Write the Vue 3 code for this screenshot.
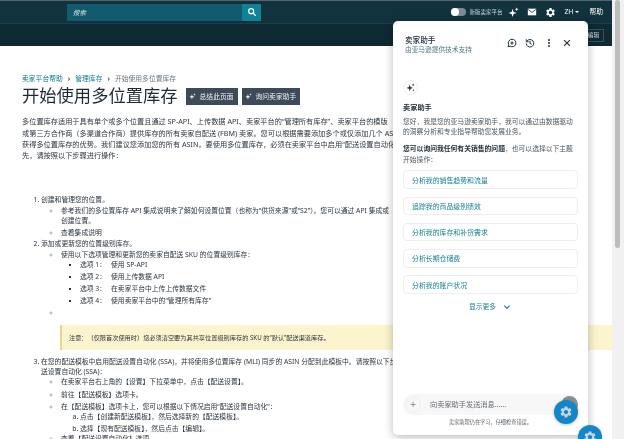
<template>
  <div class="page">
    <div class="viewport">
      <header class="topbar">
        <div class="nav-main">
          <div class="search">
            <span class="search-input">搜索</span>
            <button class="search-btn">
              <svg viewBox="0 0 24 24" width="10" height="10"><circle cx="10" cy="10" r="6" fill="none" stroke="#fff" stroke-width="3"/><path d="M15 15l6 6" stroke="#fff" stroke-width="3"/></svg>
            </button>
          </div>
          <div class="nav-right">
            <span class="toggle"><i></i></span>
            <span class="toggle-label">新版卖家平台</span>
            <svg class="nav-icon spark" viewBox="0 0 24 24" width="11" height="11"><path :d="sparkBig" fill="#fff"/><path :d="sparkSmall" fill="#fff"/></svg>
            <svg class="nav-icon mail" viewBox="0 0 24 24" width="10" height="10"><path d="M2 4h20v16H2z" fill="#fff"/><path d="M3 6l9 7 9-7" fill="none" stroke="#12333d" stroke-width="2"/></svg>
            <svg class="nav-icon gear" viewBox="0 0 24 24" width="11" height="11"><path :d="gear" fill="#fff"/></svg>
            <span class="nav-text lang">ZH <em></em></span>
            <span class="nav-text">帮助</span>
          </div>
        </div>
        <div class="nav-sub">
          <span class="edit-btn">编辑</span>
        </div>
      </header>

      <main class="content">
        <nav class="crumbs">
          <a>卖家平台帮助</a><b>›</b><a>管理库存</a><b>›</b><span>开始使用多位置库存</span>
        </nav>
        <div class="title-row">
          <h1>开始使用多位置库存</h1>
          <button class="ai-btn"><svg viewBox="0 0 24 24" width="7" height="7"><path :d="sparkBig" fill="#fff"/><path :d="sparkSmall" fill="#fff"/></svg>总结此页面</button>
          <button class="ai-btn"><svg viewBox="0 0 24 24" width="7" height="7"><path :d="sparkBig" fill="#fff"/><path :d="sparkSmall" fill="#fff"/></svg>询问卖家助手</button>
        </div>
        <p class="intro">
          多位置库存适用于具有单个或多个位置且通过 SP-API、上传数据 API、卖家平台的“管理所有库存”、卖家平台的模版<br>
          或第三方合作商（多渠道合作商）提供库存的所有卖家自配送 (FBM) 卖家。您可以根据需要添加多个或仅添加几个 ASIN<br>
          获得多位置库存的优势。我们建议您添加您的所有 ASIN。要使用多位置库存，必须在卖家平台中启用“配送设置自动化”<br>
          先，请按照以下步骤进行操作：
        </p>

        <ol class="steps">
          <li>
            创建和管理您的位置。
            <ul class="sub">
              <li>参考我们的多位置库存 API 集成说明来了解如何设置位置（也称为“供货来源”或“S2”）。您可以通过 API 集成或<br>创建位置。</li>
              <li class="gap">查看集成说明</li>
            </ul>
          </li>
          <li class="step2">
            添加或更新您的位置级别库存。
            <ul class="sub">
              <li>
                使用以下选项管理和更新您的卖家自配送 SKU 的位置级别库存：
                <ul class="opts">
                  <li v-for="o in options" :key="o.n"><span>选项 {{ o.n }}：</span>{{ o.text }}</li>
                </ul>
              </li>
              <li class="gap">&nbsp;</li>
            </ul>
            <div class="note"><span>注意：</span>（仅限首次使用时）您必须清空要为其共享位置级别库存的 SKU 的“默认”配送渠道库存。</div>
          </li>
          <li class="step3">
            在您的配送模板中启用配送设置自动化 (SSA)，并将使用多位置库存 (MLI) 同步的 ASIN 分配到此模板中。请按照以下步骤<br>送设置自动化 (SSA)：
            <ul class="sub">
              <li>在卖家平台右上角的【设置】下拉菜单中，点击【配送设置】。</li>
              <li class="gap3">前往【配送模板】选项卡。</li>
              <li class="gap2">
                在【配送模板】选项卡上，您可以根据以下情况启用“配送设置自动化”：
                <ol class="alpha">
                  <li>点击【创建新配送模板】，然后选择新的【配送模板】。</li>
                  <li class="gap2">选择【现有配送模板】，然后点击【编辑】。</li>
                </ol>
              </li>
              <li>查看【配送设置自动化】选项。</li>
            </ul>
          </li>
        </ol>
      </main>
    </div>

    <div class="scrollbar"><i></i></div>

    <aside class="panel">
      <div class="panel-head">
        <div class="panel-names">
          <div class="panel-title">卖家助手</div>
          <div class="panel-sub">由亚马逊提供技术支持</div>
        </div>
        <div class="panel-tools">
          <svg viewBox="0 0 24 24" width="10" height="10"><path d="M12 3a9 9 0 0 0-8 13l-1.500 5 5-1.500A9 9 0 1 0 12 3z" fill="none" stroke="#20303a" stroke-width="2.400"/><path d="M12 8v8M8 12h8" stroke="#20303a" stroke-width="2.400"/></svg>
          <svg viewBox="0 0 24 24" width="10" height="10"><path d="M5 7a9 9 0 1 1-2 6" fill="none" stroke="#20303a" stroke-width="2.400"/><path d="M3 3v6h6" fill="none" stroke="#20303a" stroke-width="2.400"/><path d="M12 7v6l4 2" fill="none" stroke="#20303a" stroke-width="2.400"/></svg>
          <svg viewBox="0 0 24 24" width="10" height="10"><circle cx="12" cy="5" r="2.400" fill="#20303a"/><circle cx="12" cy="12" r="2.400" fill="#20303a"/><circle cx="12" cy="19" r="2.400" fill="#20303a"/></svg>
          <svg viewBox="0 0 24 24" width="10" height="10"><path d="M5 5l14 14M19 5L5 19" stroke="#20303a" stroke-width="2.800"/></svg>
        </div>
      </div>

      <div class="panel-body">
        <div class="badge"><svg viewBox="0 0 24 24" width="9" height="9"><path :d="sparkBig" fill="#20303a"/><path :d="sparkSmall" fill="#20303a"/><circle cx="20" cy="19" r="1.800" fill="#20303a"/></svg></div>
        <div class="bot-name">卖家助手</div>
        <p class="bot-text">您好，我是您的亚马逊卖家助手，我可以通过由数据驱动的洞察分析和专业指导帮助您发展业务。</p>
        <p class="bot-text second"><strong>您可以询问我任何有关销售的问题</strong>，也可以选择以下主题开始操作：</p>
        <div class="topics">
          <button v-for="t in topics" :key="t" class="topic">{{ t }}</button>
        </div>
        <div class="more">显示更多<svg viewBox="0 0 24 24" width="8" height="8"><path d="M4 8l8 8 8-8" fill="none" stroke="#1a7f93" stroke-width="3.500"/></svg></div>
      </div>

      <div class="composer">
        <div class="input-row">
          <span class="plus">+</span>
          <span class="placeholder">向卖家助手发送消息......</span>
          <span class="send"></span>
        </div>
        <div class="disclaimer">卖家助理仍在学习，仔细检查错误。</div>
      </div>
    </aside>

    <div class="fab fab-a"><svg viewBox="0 0 24 24" width="14" height="14"><path :d="gear" fill="#c9d3da"/></svg></div>
    <div class="fab fab-b"><svg viewBox="0 0 24 24" width="14" height="14"><path :d="gear" fill="#c9d3da"/></svg></div>
  </div>
</template>

<script setup>
const sparkBig = 'M10 4l2.200 6.800L19 13l-6.800 2.200L10 22l-2.200-6.800L1 13l6.800-2.200z'
const sparkSmall = 'M19 1l1.200 2.800L23 5l-2.800 1.200L19 9l-1.200-2.800L15 5l2.800-1.200z'
const gear = 'M19.14 12.94c.04-.3.06-.61.06-.94 0-.32-.02-.64-.07-.94l2.03-1.58a.49.49 0 0 0 .12-.61l-1.92-3.32a.488.488 0 0 0-.59-.22l-2.39.96c-.5-.38-1.03-.7-1.62-.94l-.36-2.54a.484.484 0 0 0-.48-.41h-3.84c-.24 0-.43.17-.47.41l-.36 2.54c-.59.24-1.13.57-1.62.94l-2.39-.96c-.22-.08-.47 0-.59.22L2.74 8.87c-.12.21-.08.47.12.61l2.03 1.58c-.05.3-.09.63-.09.94s.02.64.07.94l-2.03 1.58a.49.49 0 0 0-.12.61l1.92 3.32c.12.22.37.29.59.22l2.39-.96c.5.38 1.03.7 1.62.94l.36 2.54c.05.24.24.41.48.41h3.84c.24 0 .44-.17.47-.41l.36-2.54c.59-.24 1.13-.56 1.62-.94l2.39.96c.22.08.47 0 .59-.22l1.92-3.32c.12-.22.07-.47-.12-.61l-2.01-1.58zM12 15.6c-1.98 0-3.6-1.62-3.6-3.6s1.62-3.6 3.6-3.6 3.6 1.62 3.6 3.6-1.62 3.6-3.6 3.6z'

const options = [
  { n: 1, text: '使用 SP-API' },
  { n: 2, text: '使用上传数据 API' },
  { n: 3, text: '在卖家平台中上传上传数据文件' },
  { n: 4, text: '使用卖家平台中的“管理所有库存”' },
]

const topics = [
  '分析我的销售趋势和流量',
  '追踪我的商品级别绩效',
  '分析我的库存和补货需求',
  '分析长期仓储费',
  '分析我的账户状况',
]
</script>

<style>
html, body { margin: 0; background: #fff; overflow: hidden; }
</style>

<style scoped>
.page {
  position: relative;
  width: 624px;
  height: 439px;
  overflow: hidden;
  display: flex;
  background: #fff;
  color: #2b3540;
  font-family: "Noto Sans", "Noto Sans CJK SC", sans-serif;
  font-size: 6.800px;
  line-height: 10.500px;
  filter: blur(0.3px);
}
.viewport { width: 612px; flex-shrink: 0; overflow: hidden; }

/* Header */
.topbar { border-top: 1px solid #55636a; }
.nav-main {
  height: 22px;
  background: #12333d;
  display: flex;
  align-items: center;
  padding-left: 67px;
  border-bottom: 1px solid #1b3f49;
}
.search { display: flex; width: 194px; height: 17px; }
.search-input {
  flex: 1;
  background: #125a6e;
  color: #dfeaee;
  font-style: italic;
  font-size: 6.400px;
  line-height: 17px;
  padding-left: 6px;
}
.search-btn {
  width: 19px;
  border: 0;
  padding: 0;
  background: #0f8296;
  display: flex;
  align-items: center;
  justify-content: center;
}
.nav-right { margin-left: auto; display: flex; align-items: center; color: #fff; padding-right: 9px; }
.toggle { width: 15px; height: 8px; border-radius: 4px; background: #7d8a90; display: flex; }
.toggle i { width: 8px; height: 8px; border-radius: 50%; background: #fff; }
.toggle-label { margin-left: 3px; font-size: 5.500px; color: #cfd9dd; }
.nav-icon.spark { margin-left: 6px; }
.nav-icon.mail { margin-left: 8px; }
.nav-icon.gear { margin-left: 8px; }
.nav-text { font-size: 6.800px; }
.lang { margin-left: 8px; display: flex; align-items: center; gap: 2px; }
.lang em { border: 2px solid transparent; border-top-color: #fff; border-bottom: 0; }
.lang + .nav-text { margin-left: 10px; }
.nav-sub {
  height: 22px;
  background: #0f2a33;
  display: flex;
  align-items: center;
  justify-content: flex-end;
  padding-right: 8px;
}
.edit-btn {
  border: 1px solid #35525b;
  color: #dbe5e8;
  padding: 0 4px;
  font-size: 5.600px;
  height: 11px;
  line-height: 11px;
}

/* Article */
.content { padding: 27px 0 0 22px; white-space: nowrap; }
.crumbs { height: 11px; line-height: 11px; color: #6b757d; display: flex; align-items: center; }
.crumbs a { color: #0f7a8c; }
.crumbs b { margin: 0 5px; font-weight: 700; color: #3a4650; }
.title-row { display: flex; align-items: center; margin-top: -1px; height: 26px; }
h1 { margin: 0; font-size: 17.300px; font-weight: 400; color: #1f2a33; line-height: 26px; }
.ai-btn {
  height: 17px;
  margin-left: 4px;
  padding: 0 4px 0 3px;
  border: 0;
  background: #3d4a5a;
  color: #eef1f4;
  font-family: inherit;
  font-size: 6.800px;
  display: flex;
  align-items: center;
  gap: 4px;
}
h1 + .ai-btn { margin-left: 8px; }
.intro { margin: 7.400px 0 0; width: 600px; font-size: 7.200px; line-height: 11.200px; }
.steps { margin: 33.800px 0 0; padding: 0 0 0 19px; }
.step2 { margin-top: 1px; }
.step3 { margin-top: 7px; line-height: 10px; }
.sub { list-style: circle; margin: 0; padding: 0 0 0 20px; }
.sub > li::marker { color: #a3adb3; }
.sub .gap { margin-top: 1px; }
.sub .gap2 { margin-top: 2px; }
.sub .gap3 { margin-top: 3px; }
.opts { list-style: square; margin: -1px 0 0; padding: 0 0 0 19px; }
.opts li { height: 12px; line-height: 12px; }
.opts span { margin-right: 5px; }
.note {
  margin: 6.500px 0 7px 19px;
  width: 560px;
  height: 25px;
  line-height: 25px;
  font-size: 6.200px;
  background: #fbf4cd;
  border-left: 2px solid #e9d68e;
  padding-left: 7px;
}
.note span { margin-right: 3px; }
.alpha { list-style: lower-alpha; margin: 0; padding: 0 0 0 19px; }

.scrollbar { flex: 1; background: #f1f1f1; padding: 0 4px 0 3px; }
.scrollbar i { display: block; height: 248px; background: #bdbdbd; border-radius: 3px; }

/* Assistant panel */
.panel {
  position: absolute;
  left: 393px;
  top: 21px;
  width: 195px;
  height: 414px;
  background: #fff;
  border-radius: 5px;
  box-shadow: 0 2px 10px rgba(0, 0, 0, 0.28);
  display: flex;
  flex-direction: column;
  font-size: 6.800px;
  line-height: 10.500px;
}
.panel-head { display: flex; justify-content: space-between; align-items: center; padding: 12px 16px 0 12px; height: 20px; }
.panel-names { padding-top: 3px; }
.panel-title { font-size: 7.600px; font-weight: 500; color: #20303a; }
.panel-sub { color: #4d7682; font-size: 6.700px; line-height: 9px; }
.panel-tools { display: flex; gap: 8.500px; }
.panel-body { flex: 1; padding: 27px 10px 0 10px; }
.badge {
  width: 15px;
  height: 15px;
  border-radius: 50%;
  border: 1px solid #ececec;
  box-sizing: border-box;
  display: flex;
  align-items: center;
  justify-content: center;
}
.bot-name { margin-top: 7px; font-size: 7.200px; font-weight: 600; color: #20303a; }
.bot-text { margin: 4px 0 0; color: #4a5560; line-height: 10.800px; }
.bot-text.second { margin-top: 6.400px; }
.bot-text strong { color: #20303a; font-weight: 600; }
.topics { display: flex; flex-direction: column; gap: 7.750px; margin-top: 4.400px; }
.topic {
  height: 18.500px;
  padding: 0 0 0 8px;
  border: 1px solid #eeeeee;
  border-radius: 4px;
  background: #fff;
  color: #16808f;
  text-align: left;
  font-family: inherit;
  font-size: 6.900px;
}
.more {
  margin-top: 8px;
  display: flex;
  align-items: center;
  justify-content: center;
  gap: 7px;
  color: #1a7f93;
  padding-right: 1px;
}
.composer { padding: 0 10px 8px; }
.input-row {
  height: 21px;
  background: #f7f7f7;
  border-radius: 11px;
  display: flex;
  align-items: center;
  position: relative;
}
.plus {
  width: 16px;
  height: 16px;
  margin-left: 2px;
  border-radius: 50%;
  border: 1px solid #f0f0f0;
  box-sizing: border-box;
  color: #8a8f94;
  font-size: 10px;
  line-height: 13px;
  text-align: center;
}
.placeholder { margin-left: 9px; color: #666d74; font-size: 7.200px; }
.send {
  position: absolute;
  right: 0;
  top: 2px;
  width: 17px;
  height: 17px;
  border-radius: 50%;
  background: #8a8d90;
}
.disclaimer { margin-top: 3px; text-align: center; font-size: 5.200px; line-height: 9px; color: #5d656c; }

.fab {
  position: absolute;
  width: 24px;
  height: 24px;
  border-radius: 50%;
  background: #1386c9;
  display: flex;
  align-items: center;
  justify-content: center;
  box-shadow: 0 1px 3px rgba(0, 0, 0, 0.25);
}
.fab-a { left: 554px; top: 400px; }
.fab-b { left: 578px; top: 425px; }
</style>
